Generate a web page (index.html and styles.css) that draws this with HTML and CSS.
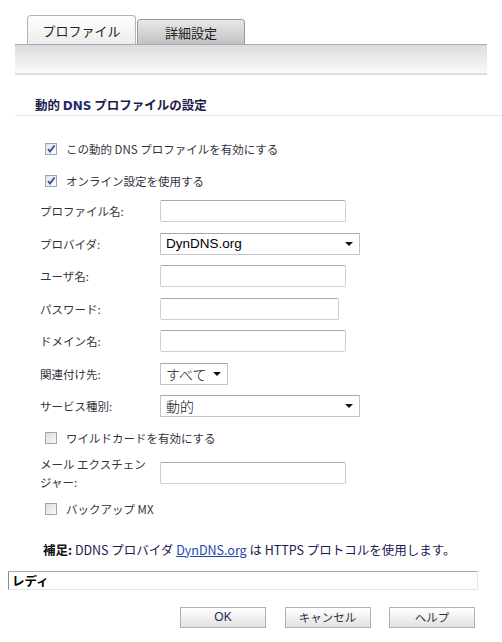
FILE: index.html
```html
<!DOCTYPE html>
<html lang="ja">
<head>
<meta charset="utf-8">
<link rel="stylesheet" href="styles.css">
</head>
<body>
<div class="tabs">
  <div class="tab active">プロファイル</div>
  <div class="tab">詳細設定</div>
</div>
<div class="toolbar"></div>

<h2 class="section-title">動的 <span class="latin">DNS</span> プロファイルの設定</h2>

<div class="form">
  <div class="check-row first">
    <span class="checkbox checked"><svg width="10" height="10" viewBox="0 0 10 10"><path d="M2 5 L4 7.5 L8.5 1.5" fill="none" stroke="#2d4f9c" stroke-width="1.8"/></svg></span>
    <span>この動的 DNS プロファイルを有効にする</span>
  </div>
  <div class="check-row second">
    <span class="checkbox checked"><svg width="10" height="10" viewBox="0 0 10 10"><path d="M2 5 L4 7.5 L8.5 1.5" fill="none" stroke="#2d4f9c" stroke-width="1.8"/></svg></span>
    <span>オンライン設定を使用する</span>
  </div>

  <div class="fields">
    <div class="field"><label>プロファイル名:</label><input class="input" type="text"></div>
    <div class="field"><label>プロバイダ:</label><div class="select wide"><span class="sel-text">DynDNS.org</span><span class="caret"></span></div></div>
    <div class="field"><label>ユーザ名:</label><input class="input" type="text"></div>
    <div class="field"><label>パスワード:</label><input class="input pw" type="password"></div>
    <div class="field"><label>ドメイン名:</label><input class="input" type="text"></div>
    <div class="field"><label>関連付け先:</label><div class="select narrow"><span class="sel-text cjk">すべて</span><span class="caret"></span></div></div>
    <div class="field"><label>サービス種別:</label><div class="select wide"><span class="sel-text cjk">動的</span><span class="caret"></span></div></div>
  </div>

  <div class="check-row wild">
    <span class="checkbox"></span>
    <span>ワイルドカードを有効にする</span>
  </div>
  <div class="field mail"><label>メール エクスチェン<br>ジャー:</label><input class="input" type="text"></div>
  <div class="check-row backup">
    <span class="checkbox"></span>
    <span>バックアップ MX</span>
  </div>
</div>

<p class="note"><b>補足:</b> DDNS プロバイダ <a href="#">DynDNS.org</a> は HTTPS プロトコルを使用します。</p>

<div class="status">レディ</div>

<div class="buttons">
  <button class="btn ok">OK</button>
  <button class="btn">キャンセル</button>
  <button class="btn">ヘルプ</button>
</div>
</body>
</html>
```

FILE: styles.css
```css
* { box-sizing: border-box; }
html, body { margin: 0; padding: 0; background: #fff; }
body {
  width: 502px;
  height: 642px;
  overflow: hidden;
  font-family: "Noto Sans CJK JP", "Liberation Sans", sans-serif;
  color: #34343e;
  font-size: 11.5px;
}

.tabs {
  display: flex;
  align-items: flex-end;
  padding: 15px 0 0 27px;
  height: 44px;
}
.tab {
  width: 108px;
  height: 25px;
  margin-left: 1px;
  border: 1px solid #9c9c9c;
  border-bottom: none;
  border-radius: 4px 4px 0 0;
  background: linear-gradient(#e8e8e8, #c2c2c2);
  display: flex;
  align-items: center;
  justify-content: center;
  font-size: 13px;
  color: #222;
}
.tab.active {
  width: 109px;
  height: 29px;
  margin-left: 0;
  border-color: #b4b4b4;
  background: linear-gradient(#ffffff, #ececec);
}

.toolbar {
  margin-left: 15px;
  width: 472px;
  height: 31px;
  border-top: 1px solid #a9a5c6;
  border-bottom: 2px solid #dedede;
  background: linear-gradient(#dcdcdc, #fafafa);
}

.section-title {
  margin: 20px 0 0 15px;
  padding-left: 20px;
  height: 21px;
  line-height: 20px;
  font-size: 12.5px;
  font-weight: bold;
  color: #1c1c48;
  border-bottom: 1px solid #e6e6e6;
}
.section-title .latin { font-family: "DejaVu Sans", sans-serif; font-size: 12px; color: #1e2a6e; }

.form { padding-left: 40px; }

.check-row {
  display: flex;
  align-items: center;
  gap: 9px;
  padding-left: 5px;
  height: 20px;
}
.check-row.first { margin-top: 23px; }
.check-row.second { margin-top: 12px; }
.check-row.wild { height: 30px; }
.check-row.backup { height: 32px; }

.checkbox {
  width: 12px;
  height: 12px;
  border: 1px solid #a4a4a4;
  background: linear-gradient(135deg, #dedede, #f8f8f8);
  display: flex;
  align-items: center;
  justify-content: center;
}
.checkbox.checked { background: linear-gradient(135deg, #e4e4ec, #fafafa); }

.fields { margin-top: 4px; }
.field {
  display: flex;
  align-items: center;
  height: 32.5px;
}
.field label { width: 120px; }
.field.mail { height: 40px; }
.field.mail label { line-height: 18px; }

.input {
  width: 186px;
  height: 22px;
  margin: 0;
  border: 1px solid #cfcfcf;
  border-top-color: #a8a8a8;
  border-radius: 2px;
  background: #fff;
  padding: 0 4px;
}
.input.pw { width: 179px; }

.select {
  height: 22px;
  border: 1px solid #c4c4c4;
  border-top-color: #a8a8a8;
  background: #fff;
  display: flex;
  align-items: center;
  justify-content: space-between;
  padding: 0 6px 0 5px;
}
.select.wide { width: 200px; }
.select.narrow { width: 68px; }
.sel-text {
  font-family: "Liberation Sans", sans-serif;
  font-size: 13.5px;
  color: #000;
}
.sel-text.cjk {
  font-family: "Noto Sans CJK JP", sans-serif;
  font-size: 14px;
  font-weight: 300;
  color: #111;
}
.caret {
  width: 0;
  height: 0;
  border-left: 4px solid transparent;
  border-right: 4px solid transparent;
  border-top: 4px solid #111;
}

.note {
  margin: 15px 0 0 43px;
  height: 20px;
  line-height: 20px;
  font-size: 12.5px;
  color: #1c2050;
}
.note b { color: #111; }
.note a { color: #1a48b0; text-decoration: underline; }

.status {
  margin: 11px 0 0 8px;
  width: 470px;
  height: 19px;
  border-top: 1px solid #a8a8a8;
  border-left: 1px solid #8c8c8c;
  border-right: 1px solid #e4e4e4;
  border-bottom: 1px solid #e4e4e4;
  padding-left: 3px;
  line-height: 17px;
  font-weight: bold;
  font-size: 12.5px;
  color: #000;
}

.buttons {
  display: flex;
  gap: 18.5px;
  margin: 17px 0 0 180px;
}
.btn {
  width: 86px;
  height: 21px;
  border: 1px solid #b0b0b0;
  background: linear-gradient(#ffffff, #e2e2e2);
  font-family: "Noto Sans CJK JP", "Liberation Sans", sans-serif;
  font-size: 11.5px;
  color: #30303c;
  padding: 0;
}
.btn.ok { font-family: "Liberation Sans", sans-serif; font-size: 12px; color: #1c2a5a; }
```
